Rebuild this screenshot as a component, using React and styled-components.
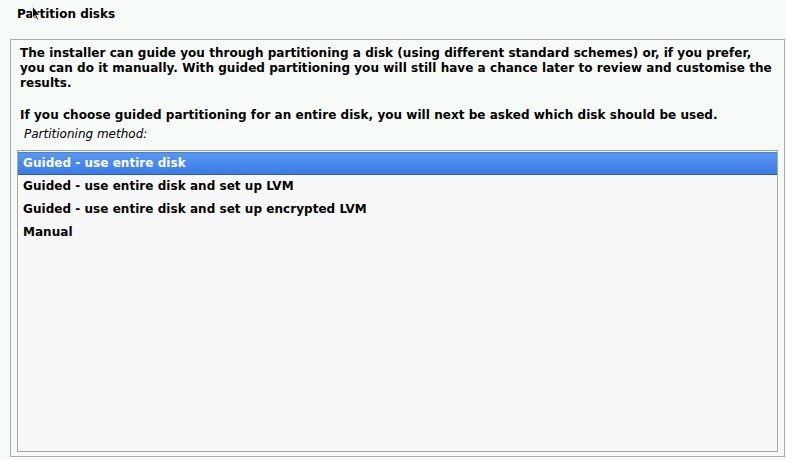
import React from "react";
import styled, { createGlobalStyle } from "styled-components";

const Global = createGlobalStyle`
  html, body {
    margin: 0;
    padding: 0;
    background: #f6fbf7;
  }
  body {
    font-family: "DejaVu Sans", "Liberation Sans", sans-serif;
    color: #000;
  }
`;

const Screen = styled.div`
  width: 786px;
  height: 460px;
  box-sizing: border-box;
  display: flex;
  flex-direction: column;
  position: relative;
  overflow: hidden;
`;

const Title = styled.h1`
  margin: 0;
  height: 39px;
  padding: 7px 0 0 17px;
  box-sizing: border-box;
  font-size: 12px;
  font-weight: bold;
  line-height: 15px;
`;

const Frame = styled.div`
  margin: 0 1px 3px 10px;
  flex: 1;
  border: 1px solid #a9aca8;
  display: flex;
  flex-direction: column;
  padding: 6px 6px 4px 6px;
  min-height: 0;
`;

const Intro = styled.p`
  margin: 0 0 0 3px;
  font-size: 12px;
  font-weight: bold;
  line-height: 15px;
  letter-spacing: 0.04px;
  white-space: pre;
`;

const Gap = styled.div`
  height: 17px;
`;

const Label = styled.div`
  font-size: 12px;
  font-style: italic;
  line-height: 15px;
  padding: 4px 0 0 7px;
  margin-bottom: 8px;
`;

const List = styled.ul`
  list-style: none;
  margin: 0;
  padding: 1px 0 0;
  flex: 1;
  background: #f8f8f8;
  border: 1px solid #a7a8a6;
  border-top-color: #9b9c9a;
`;

const Row = styled.li`
  height: ${p => (p.$selected ? "21px" : "23px")};
  line-height: ${p => (p.$selected ? "21px" : "23px")};
  padding-left: 5px;
  font-size: 12px;
  font-weight: bold;
  letter-spacing: 0.04px;
  color: ${p => (p.$selected ? "#ffffff" : "#000")};
  background: ${p =>
    p.$selected
      ? "linear-gradient(to bottom, #5b97f1 0%, #4a88ec 50%, #3b7ae3 100%)"
      : "transparent"};
  border-top: ${p => (p.$selected ? "1px solid #3f7fe0" : "none")};
  border-bottom: ${p => (p.$selected ? "1px solid #2a5fc0" : "none")};
`;

const Cursor = styled.svg`
  position: absolute;
  left: 32px;
  top: 6px;
`;

const options = [
  "Guided - use entire disk",
  "Guided - use entire disk and set up LVM",
  "Guided - use entire disk and set up encrypted LVM",
  "Manual",
];

const intro = [
  "The installer can guide you through partitioning a disk (using different standard schemes) or, if you prefer,",
  "you can do it manually. With guided partitioning you will still have a chance later to review and customise the",
  "results.",
];

export default function App() {
  return (
    <Screen>
      <Global />
      <Title>Partition disks</Title>
      <Frame>
        <Intro>{intro.join("\n")}</Intro>
        <Gap />
        <Intro>
          If you choose guided partitioning for an entire disk, you will next be asked which disk should be used.
        </Intro>
        <Label>Partitioning method:</Label>
        <List>
          {options.map((o, i) => (
            <Row key={o} $selected={i === 0}>
              {o}
            </Row>
          ))}
        </List>
      </Frame>
      <Cursor width="10" height="16" viewBox="0 0 10 16">
        <path d="M0.5 0.5 L0.5 12 L3 9.5 L5 14 L6.5 13.3 L4.6 9 L8 9 Z" fill="#000" stroke="#fff" strokeWidth="0.8" />
      </Cursor>
    </Screen>
  );
}
